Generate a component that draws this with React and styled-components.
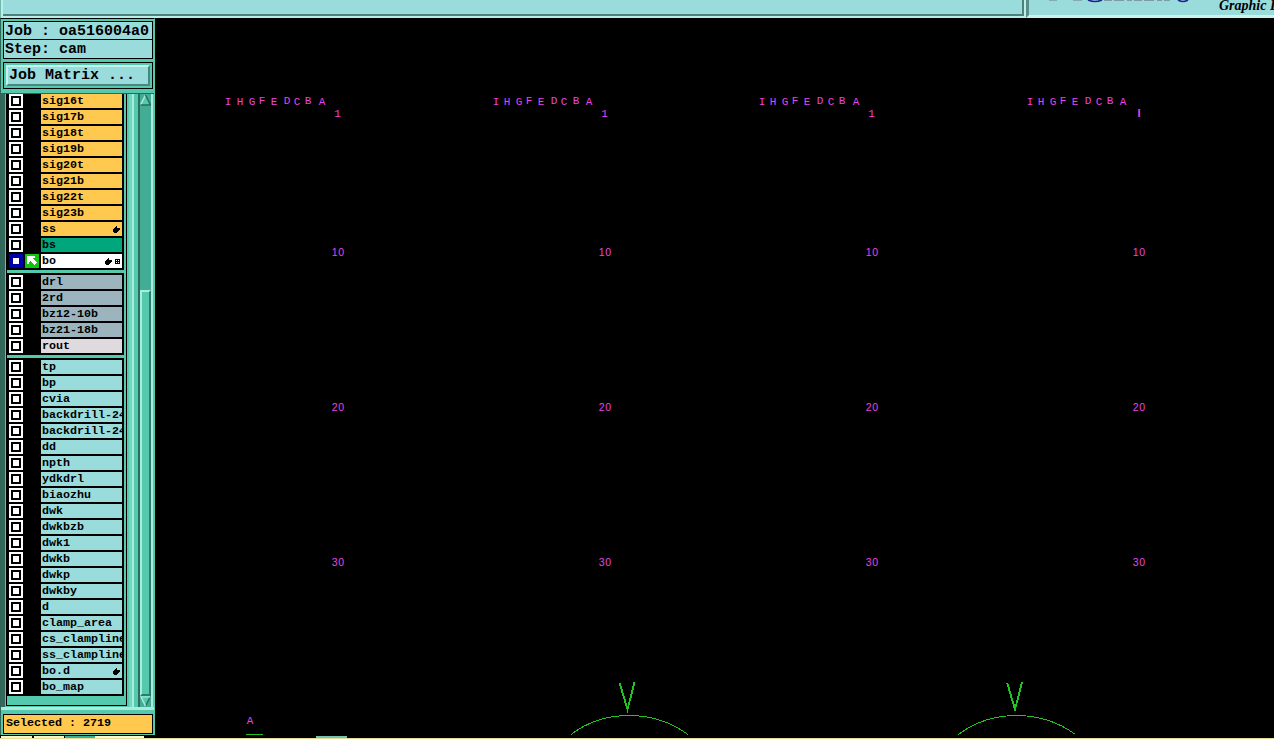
import React from "react";
import styled, { createGlobalStyle } from "styled-components";

const GlobalStyle = createGlobalStyle`
  *, *::before, *::after {
    box-sizing: border-box;
  }
  body {
    margin: 0;
    background: #000;
    overflow: hidden;
  }
`;

const Screen = styled.div`
  width: 1274px;
  height: 739px;
  display: flex;
  flex-direction: column;
  background: #000;
  overflow: hidden;
  color: #000;
  font-family: "Liberation Mono", "Courier New", monospace;
  font-weight: 700;
`;

/* ---- top strip ---- */
const TopBar = styled.header`
  display: flex;
  flex: 0 0 18px;
  overflow: hidden;
`;

const MessagePanel = styled.div`
  width: 1026px;
  padding: 0 2px 2px 2px;
  background: #b9eeea;
  border-left: 1px solid #6fb9ac;
`;

const MessageArea = styled.div`
  height: 16px;
  background: #9adcdc;
  border-right: 2px solid #4d807a;
  border-bottom: 2px solid #4d807a;
`;

const Brand = styled.div`
  flex: 1;
  display: flex;
  justify-content: space-between;
  background: #9adcdc;
  border-left: 3px solid #5a8d88;
  border-bottom: 3px solid #c9f3f1;
  overflow: hidden;
`;

const Tagline = styled.div`
  width: 55px;
  height: 17px;
  font: italic 700 14px/17px "Liberation Serif", serif;
  margin-top: -3px;
  white-space: nowrap;
`;

/* ---- middle ---- */
const Main = styled.main`
  display: flex;
  flex: 1;
  min-height: 0;
`;

const Sidebar = styled.aside`
  width: 155px;
  height: 717px;
  padding: 2px 2px 1px 3px;
  background: #55c9ae;
  border-top: 1px solid #000;
  border-left: 1px solid #2e6658;
  border-right: 1px solid #55c9ae;
  display: flex;
  flex-direction: column;
`;

const InfoBox = styled.div`
  height: ${(p) => p.$h}px;
  margin: 0 -1px -1px;
  padding-left: 1px;
  border: 1px solid #000;
  background: #9adcdc;
  font-size: 15px;
  line-height: ${(p) => p.$h}px;
  white-space: pre;
  overflow: hidden;
`;

const ButtonWell = styled.div`
  height: 27px;
  margin: 4px -1px 0;
  padding: 2px;
  border: 1px solid #000;
`;

const MatrixButton = styled.button`
  display: block;
  width: 100%;
  height: 21px;
  padding: 0 0 0 1px;
  border: 2px solid;
  border-color: #c3f3ee #4b8580 #4b8580 #c3f3ee;
  background: #9adcdc;
  color: #000;
  text-align: left;
  font: 700 15px/17px "Liberation Mono", monospace;
`;

const ListArea = styled.div`
  display: flex;
  height: 617px;
  margin: 4px -2px 0 -3px;
  border-top: 1px solid #2e6658;
  border-bottom: 3px solid #a8ecdd;
`;

const ListFrame = styled.div`
  width: 133px;
  height: 613px;
  padding-left: 1px;
  background: #55c9ae;
  border-left: 4px solid #34685c;
  border-right: 2px solid #a8ecdd;
  box-shadow: inset -3px 0 #74d5c0;
`;

const LayerList = styled.div`
  width: 121px;
  height: 612px;
  background: #55c9ae;
  border-left: 1px solid #000;
  border-right: 1px solid #000;
  border-bottom: 1px solid #000;
  overflow: hidden;
`;

const LayerGroup = styled.div`
  width: 117px;
  padding: ${(p) => (p.$first ? 0 : 2)}px 2px 0;
  margin-bottom: 3px;
  background: #000;
`;

const LayerRow = styled.div`
  display: flex;
  height: 16px;
  padding-bottom: 2px;
`;

const Toggle = styled.div`
  width: 14px;
  height: 14px;
  display: grid;
  place-items: center;
  background: ${(p) => (p.$on ? "#0000a8" : "#fff")};
`;

const ToggleMark = styled.div`
  width: 10px;
  height: 10px;
  border: 2px solid ${(p) => (p.$on ? "#0000a8" : "#000")};
  background: #fff;
`;

const Marker = styled.div`
  width: 14px;
  height: 14px;
  margin: 0 2px;
  background: ${(p) => (p.$on ? "#0fc70f" : "#000")};
`;

const LayerName = styled.div`
  display: flex;
  align-items: center;
  justify-content: space-between;
  width: 81px;
  height: 14px;
  padding-left: 1px;
  background: ${(p) => p.$color};
  font-size: 11.67px;
  line-height: 13px;
  white-space: nowrap;
  overflow: hidden;
`;

const Flags = styled.span`
  display: flex;
  align-items: center;
  gap: 3px;
  padding-right: 2px;
`;

const Rail = styled.div`
  width: 4px;
  background: #55c9ae;
`;

const Scrollbar = styled.div`
  display: flex;
  flex-direction: column;
  width: 15px;
  background: #43ac95;
  border-left: 2px solid #2b6e60;
  border-right: 2px solid #a8ecdd;
`;

const Track = styled.div`
  height: 184px;
`;

const Thumb = styled.div`
  height: 406px;
  background: #55c9ae;
  border: 2px solid;
  border-color: #a8ecdd #2b7d6a #2b7d6a #a8ecdd;
`;

const Selected = styled.div`
  height: 20px;
  margin: 4px -1px 0;
  padding-left: 2px;
  border: 1px solid #000;
  background: #ffc84e;
  font-size: 11.67px;
  line-height: 17px;
`;

const Canvas = styled.svg`
  display: block;
  width: 1119px;
  height: 718px;
  font-family: "Liberation Sans", Arial, sans-serif;
  font-weight: 400;
`;

const Stroked = styled.text`
  font-family: "Liberation Mono", monospace;
  font-size: ${(p) => p.$size || 11}px;
`;

const TaskStrip = styled.footer`
  display: flex;
  flex: 0 0 2px;
  border-bottom: 1px solid #e8dc98;
  padding-left: 1px;
`;

const Task = styled.div`
  width: ${(p) => p.$w}px;
  margin-right: ${(p) => p.$gap || 0}px;
  height: 2px;
  background: ${(p) => p.$color};
`;

const ORANGE = "#ffc84e";
const GREY = "#9bb4bd";
const AQUA = "#9adcdc";

const groups = [
  [
    ["sig16t", ORANGE],
    ["sig17b", ORANGE],
    ["sig18t", ORANGE],
    ["sig19b", ORANGE],
    ["sig20t", ORANGE],
    ["sig21b", ORANGE],
    ["sig22t", ORANGE],
    ["sig23b", ORANGE],
    ["ss", ORANGE, "hand"],
    ["bs", "#00a67c"],
    ["bo", "#fff", "hand grid"],
  ],
  [
    ["drl", GREY],
    ["2rd", GREY],
    ["bz12-10b", GREY],
    ["bz21-18b", GREY],
    ["rout", "#dedade"],
  ],
  [
    "tp", "bp", "cvia", "backdrill-24", "backdrill-24", "dd", "npth", "ydkdrl",
    "biaozhu", "dwk", "dwkbzb", "dwk1", "dwkb", "dwkp", "dwkby", "d",
    "clamp_area", "cs_clampline", "ss_clampline", "bo.d", "bo_map",
  ].map((name) => [name, AQUA, name === "bo.d" ? "hand" : ""]),
];

const HandIcon = () => (
  <svg width="7" height="7" viewBox="0 0 7 7" shapeRendering="crispEdges">
    <path d="M3 0h1v2h3v2H6v1H5v1H4v1H1V6H0V3h1V2h1V1h1z" />
  </svg>
);

const GridIcon = () => (
  <svg width="5" height="5" viewBox="0 0 5 5" shapeRendering="crispEdges">
    <path d="M0 0h5v5H0z" />
    <path d="M1 1h1v1H1zM3 1h1v1H3zM1 3h1v1H1zM3 3h1v1H3z" fill="#fff" />
  </svg>
);

const ArrowIcon = () => (
  <svg width="14" height="14" viewBox="0 0 14 14" shapeRendering="crispEdges">
    <path d="M2 2h8v2H8v1h1v1h1v1h1v1h1v1h-1v1h-1v1H9v-1H8V9H7V8H6V7H5v1H4v2H2z" fill="#fff" />
  </svg>
);

const ScrollArrow = ({ down }) => (
  <svg width="11" height={down ? 11 : 12} viewBox="0 0 11 12">
    <g transform={down ? "rotate(180 5.5 6)" : undefined}>
      <path d="M5.5 1L10.5 11H.5z" fill="#55c9ae" />
      <path d="M5.5 1L.5 11" stroke={down ? "#2b6e60" : "#a8ecdd"} strokeWidth="1.5" />
      <path d="M5.5 1l5 10H.5" fill="none" stroke={down ? "#a8ecdd" : "#2b6e60"} strokeWidth="1.5" />
    </g>
  </svg>
);

// only the lower edge of the wordmark is visible under the window border
const Wordmark = () => (
  <svg width="160" height="6" viewBox="1029 0 160 6">
    <g fill="none">
      <path d="M1049 .5h8M1073 .5h9" stroke="#86aab5" />
      <path d="M1104 .5h66" stroke="#7d9aa6" strokeDasharray="8 2 10 3 5 2" />
      <path d="M1088 0q7 3 14 0M1178 0q5 3 10 0" stroke="#22228e" strokeWidth="1.6" />
    </g>
  </svg>
);

const columns = [
  { letters: [228, 240, 252, 262, 274, 287, 297, 308, 322], x: 338 },
  { letters: [496, 507, 519, 529, 541, 554, 564, 576, 589], x: 605 },
  { letters: [762, 773, 785, 795, 807, 820, 831, 842, 856], x: 872 },
  { letters: [1030, 1041, 1053, 1063, 1075, 1088, 1099, 1110, 1123], x: 1139 },
];

const rowLabels = [
  ["10", 256],
  ["20", 411],
  ["30", 566],
];

function Drawing() {
  return (
    <Canvas viewBox="155 18 1119 718">
      <g fill="#e844e8" textAnchor="middle">
        {columns.map((col, c) => (
          <g key={col.x}>
            {"IHGFEDCBA".split("").map((ch, i) => (
              <Stroked key={ch} x={col.letters[i]} y={"FDB".includes(ch) ? 104 : 105}>
                {ch}
              </Stroked>
            ))}
            {c === 3 ? (
              <text x={col.x} y="117" fontSize="11" fontWeight="700">I</text>
            ) : (
              <Stroked x={col.x - 0.5} y="117">1</Stroked>
            )}
            {rowLabels.map(([label, y]) => (
              <text key={label} x={col.x + 0.3} y={y} fontSize="10.5" letterSpacing="0.6">
                {label}
              </text>
            ))}
          </g>
        ))}
        <Stroked x="250" y="724">A</Stroked>
      </g>
      <g fill="none" stroke="#22c422" shapeRendering="crispEdges">
        <path d="M246 734.5h17" />
        {[0, 387.5].map((dx) => (
          <g key={dx} transform={`translate(${dx} 0)`}>
            <path d="M619.7 683L627.5 709.5L634.5 682" strokeWidth="1.9" />
            <path d="M571 734.5Q596 715.5 629 715.5T688 734.5" />
          </g>
        ))}
      </g>
    </Canvas>
  );
}

export default function App() {
  return (
    <Screen>
      <GlobalStyle />
      <TopBar>
        <MessagePanel>
          <MessageArea />
        </MessagePanel>
        <Brand>
          <Wordmark />
          <Tagline>Graphic D</Tagline>
        </Brand>
      </TopBar>
      <Main>
        <Sidebar>
          <InfoBox $h={19}>Job : oa516004a0</InfoBox>
          <InfoBox $h={20}>Step: cam</InfoBox>
          <ButtonWell>
            <MatrixButton>Job Matrix ...</MatrixButton>
          </ButtonWell>
          <ListArea>
            <ListFrame>
              <LayerList>
                {groups.map((rows, g) => (
                  <LayerGroup key={g} $first={g === 0}>
                    {rows.map(([name, color, flags = ""], i) => {
                      const on = name === "bo";
                      return (
                        <LayerRow key={i}>
                          <Toggle $on={on}>
                            <ToggleMark $on={on} />
                          </Toggle>
                          <Marker $on={on}>{on && <ArrowIcon />}</Marker>
                          <LayerName $color={color}>
                            {name}
                            {flags && (
                              <Flags>
                                {flags.includes("hand") && <HandIcon />}
                                {flags.includes("grid") && <GridIcon />}
                              </Flags>
                            )}
                          </LayerName>
                        </LayerRow>
                      );
                    })}
                  </LayerGroup>
                ))}
              </LayerList>
            </ListFrame>
            <Rail />
            <Scrollbar>
              <ScrollArrow />
              <Track />
              <Thumb />
              <ScrollArrow down />
            </Scrollbar>
          </ListArea>
          <Selected>Selected : 2719</Selected>
        </Sidebar>
        <Drawing />
      </Main>
      <TaskStrip>
        <Task $w={31} $gap={2} $color="#fdf3c4" />
        <Task $w={30} $gap={1} $color="#fdf3c4" />
        <Task $w={30} $color="#43ac95" />
        <Task $w={49} $gap={172} $color="#fffbd0" />
        <Task $w={31} $color="#6fc4b4" />
      </TaskStrip>
    </Screen>
  );
}
